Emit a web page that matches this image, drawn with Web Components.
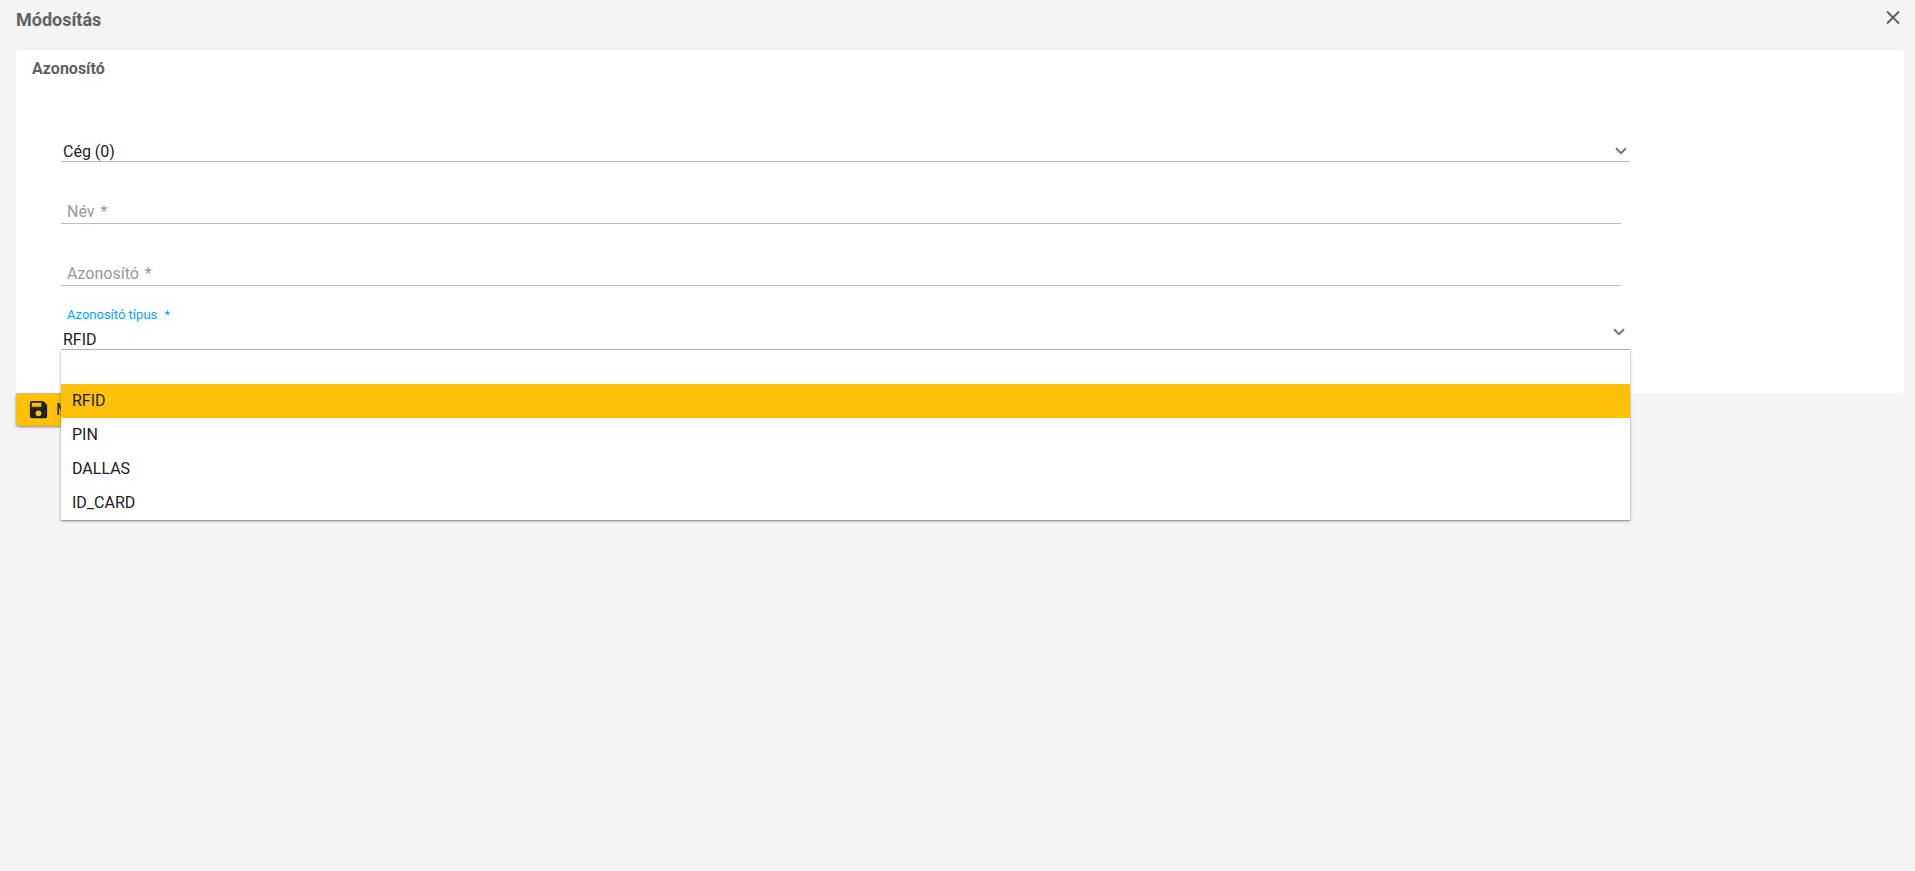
<!DOCTYPE html>
<html lang="hu">
<head>
<meta charset="utf-8">
<meta name="viewport" content="width=device-width, initial-scale=1">
<title>Módosítás</title>
<style>
    html {
        --bg: #f4f4f4;
        --surface: #ffffff;
        --text: #212121;
        --text-heading: #616161;
        --text-muted: #999999;
        --line: #bdbdbd;
        --accent: #ffc107;
        --focus: #149ef4;
    }

    body {
        margin: 0;
        background: var(--bg);
        color: var(--text);
        font: 16px/20px Roboto, "Open Sans", sans-serif;
    }
</style>
</head>
<body>

<edit-dialog heading="Módosítás">
    <form-card heading="Azonosító">
        <select-field label="Cég" hide-label options="Cég (0)" value="Cég (0)"></select-field>
        <text-field label="Név"></text-field>
        <text-field label="Azonosító"></text-field>
        <select-field label="Azonosító típus" options=",RFID,PIN,DALLAS,ID_CARD" value="RFID" open></select-field>
    </form-card>
    <save-button slot="actions">Mentés</save-button>
</edit-dialog>

<script>
class EditDialog extends HTMLElement {
    connectedCallback() {
        this.attachShadow({ mode: 'open' }).innerHTML = `
            <style>
                :host {
                    display: block;
                    box-sizing: border-box;
                    min-height: 100vh;
                    padding: 0 11px 0 16px;
                }

                header {
                    display: flex;
                    justify-content: space-between;
                    align-items: flex-start;
                    padding: 6px 0 12px;
                }

                h1 {
                    margin: 0;
                    padding-top: 2px;
                    color: var(--text-heading);
                    font-size: 18px;
                    line-height: 24px;
                    height: 30px;
                    font-weight: 700;
                }

                button {
                    display: flex;
                    width: 24px;
                    height: 24px;
                    padding: 0;
                    border: 0;
                    background: none;
                    color: var(--text-heading);
                    cursor: pointer;
                }
            </style>
            <header>
                <h1>${this.getAttribute('heading')}</h1>
                <button type="button" aria-label="Bezárás">
                    <svg width="24" height="24" viewBox="0 0 24 24" fill="none" stroke="currentColor" stroke-width="2">
                        <path d="M7 5.5l12 12M19 5.5l-12 12"/>
                    </svg>
                </button>
            </header>
            <slot></slot>
            <slot name="actions"></slot>
        `;
    }
}

class FormCard extends HTMLElement {
    connectedCallback() {
        this.attachShadow({ mode: 'open' }).innerHTML = `
            <style>
                :host {
                    display: block;
                    padding: 8px 16px 43px;
                    border-radius: 3px;
                    background: var(--surface);
                }

                h2 {
                    margin: 0 0 20px;
                    color: var(--text-heading);
                    font-size: 16px;
                    line-height: 22px;
                    font-weight: 700;
                }

                .fields {
                    display: grid;
                    padding: 0 258px 0 29px;
                }
            </style>
            <h2>${this.getAttribute('heading')}</h2>
            <div class="fields"><slot></slot></div>
        `;
    }
}

class TextField extends HTMLElement {
    connectedCallback() {
        this.attachShadow({ mode: 'open' }).innerHTML = `
            <style>
                :host {
                    display: grid;
                    padding: 37px 9px 0 0;
                }

                /* label rests on the empty input */
                label, input {
                    grid-area: 1 / 1;
                    padding: 3px 6px 1px;
                }

                label {
                    color: var(--text-muted);
                    pointer-events: none;
                }

                label span {
                    margin-left: 2px;
                }

                input {
                    box-sizing: border-box;
                    width: 100%;
                    height: 25px;
                    border: 0;
                    border-bottom: 1px solid var(--line);
                    background: none;
                    color: inherit;
                    font: inherit;
                    outline: 0;
                }

                input:focus {
                    border-color: var(--focus);
                }

                :host(.filled) label {
                    visibility: hidden;
                }
            </style>
            <input id="control" type="text" required>
            <label for="control">${this.getAttribute('label')} <span>*</span></label>
        `;

        const input = this.shadowRoot.querySelector('input');
        input.addEventListener('input', () => this.classList.toggle('filled', input.value !== ''));
    }
}

class SelectField extends HTMLElement {
    connectedCallback() {
        const label = this.getAttribute('label');
        const value = this.getAttribute('value');
        const options = this.getAttribute('options').split(',');
        const hidden = this.hasAttribute('hide-label');

        this.attachShadow({ mode: 'open' }).innerHTML = `
            <style>
                :host {
                    display: block;
                    position: relative;
                    padding-top: 37px;
                }

                :host([open]) {
                    padding-top: 19px;
                }

                .box {
                    display: grid;
                    align-items: center;
                    border-bottom: 1px solid var(--line);
                }

                .control {
                    grid-area: 1 / 1;
                }

                label {
                    display: block;
                    padding: 0 6px;
                    color: var(--focus);
                    font-size: 13px;
                    line-height: 20px;
                }

                label span {
                    margin-left: 4px;
                }

                select {
                    display: block;
                    appearance: none;
                    width: 100%;
                    height: 24px;
                    padding: 5px 24px 0 2px;
                    border: 0;
                    background: none;
                    color: inherit;
                    font: inherit;
                    outline: 0;
                }

                svg {
                    grid-area: 1 / 1;
                    justify-self: end;
                    margin: 4px 3px 0 0;
                    color: #757575;
                    pointer-events: none;
                }

                :host([open]) svg {
                    margin: 10px 5px 0 0;
                }

                ul {
                    display: none;
                    position: absolute;
                    top: 100%;
                    left: 0;
                    right: 0;
                    z-index: 10;
                    margin: 0;
                    padding: 0;
                    list-style: none;
                    background: var(--surface);
                    box-shadow: 0 1px 3px rgba(0, 0, 0, 0.3), 0 1px 1px rgba(0, 0, 0, 0.2);
                }

                :host([open]) ul {
                    display: block;
                }

                li {
                    height: 20px;
                    padding: 7px 11px;
                    cursor: pointer;
                }

                li[aria-selected="true"] {
                    background: var(--accent);
                }
            </style>
            <div class="box">
                <div class="control">
                    ${hidden ? '' : `<label for="control">${label} <span>*</span></label>`}
                    <select id="control" ${hidden ? `aria-label="${label}"` : 'required'}>
                        ${options.map((o) => `<option ${o === value ? 'selected' : ''}>${o}</option>`).join('')}
                    </select>
                </div>
                <svg width="12" height="8" viewBox="0 0 12 8" fill="none" stroke="currentColor" stroke-width="2">
                    <path d="M1 1.2l5 5 5-5"/>
                </svg>
            </div>
            <ul role="listbox" aria-label="${label}">
                ${options.map((o) => `<li role="option" aria-selected="${o === value}">${o}</li>`).join('')}
            </ul>
        `;

        this.select = this.shadowRoot.querySelector('select');
        this.items = [...this.shadowRoot.querySelectorAll('li')];
        this.items.forEach((item, i) => item.addEventListener('click', () => this.choose(i)));
        this.select.addEventListener('change', () => this.choose(this.select.selectedIndex));
    }

    choose(index) {
        this.select.selectedIndex = index;
        this.items.forEach((item, i) => item.setAttribute('aria-selected', i === index));
    }
}

class SaveButton extends HTMLElement {
    connectedCallback() {
        this.attachShadow({ mode: 'open' }).innerHTML = `
            <style>
                :host {
                    display: flex;
                }

                button {
                    display: flex;
                    align-items: center;
                    gap: 6px;
                    height: 33px;
                    padding: 0 16px 0 11px;
                    border: 0;
                    border-radius: 3px;
                    background: var(--accent);
                    color: var(--text);
                    font: inherit;
                    box-shadow: 0 1px 3px rgba(0, 0, 0, 0.3), 0 1px 2px rgba(0, 0, 0, 0.2);
                    cursor: pointer;
                }
            </style>
            <button type="button">
                <svg width="23" height="23" viewBox="0 0 24 24" fill="currentColor" aria-hidden="true">
                    <path d="M17 3H5a2 2 0 0 0-2 2v14a2 2 0 0 0 2 2h14a2 2 0 0 0 2-2V7l-4-4zm-5 16a3 3 0 1 1 0-6 3 3 0 0 1 0 6zm3-10H5V5h10v4z"/>
                </svg>
                <slot></slot>
            </button>
        `;
    }
}

customElements.define('edit-dialog', EditDialog);
customElements.define('form-card', FormCard);
customElements.define('text-field', TextField);
customElements.define('select-field', SelectField);
customElements.define('save-button', SaveButton);
</script>
</body>
</html>
